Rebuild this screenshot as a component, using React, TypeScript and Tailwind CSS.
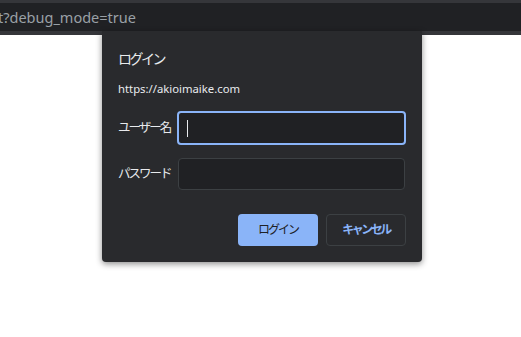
export default function App() {
  return (
    <div
      className="relative w-[521px] h-[337px] overflow-hidden bg-white"
      style={{ fontFamily: '"Noto Sans", "Noto Sans CJK JP", sans-serif' }}
    >
      {/* browser chrome */}
      <div className="h-[3px] bg-[#35363a]" />
      <div className="h-[28px] bg-[#202124] flex items-center overflow-hidden">
        <span className="-ml-[2px] text-[14.5px] leading-none text-[#9aa0a6] whitespace-nowrap">
          t?debug_mode=true
        </span>
      </div>
      <div className="h-[4px] bg-[#35363a]" />

      {/* login dialog */}
      <div className="absolute left-[102px] top-[31px] w-[320px] rounded-b-[4px] bg-[#292a2d] shadow-[0_2px_6px_rgba(0,0,0,0.45)] pl-[16px] pr-[16px] pt-[18px] pb-[16px]">
        <div className="text-[14px] leading-[20px] tracking-[-2.5px] text-[#e8eaed]">ログイン</div>
        <div className="mt-[12px] text-[11.3px] leading-[16px] text-[#e8eaed]">https://akioimaike.com</div>

        <div className="mt-[14px] flex items-center">
          <label className="w-[59px] shrink-0 whitespace-nowrap text-[12.5px] tracking-[-2px] text-[#e8eaed]">ユーザー名</label>
          <div className="w-[229px] h-[34px] rounded-[4px] border-2 border-[#8ab4f8] bg-[#202124] flex items-center pl-[8px]">
            <div className="w-px h-[17px] bg-[#e8eaed]" />
          </div>
        </div>

        <div className="mt-[13px] flex items-center">
          <label className="w-[60px] shrink-0 whitespace-nowrap text-[12.5px] tracking-[-2px] text-[#e8eaed]">パスワード</label>
          <div className="w-[227px] h-[32px] rounded-[4px] border border-[#3c4043] bg-[#202124]" />
        </div>

        <div className="mt-[24px] flex justify-end gap-[8px]">
          <button className="w-[80px] h-[32px] rounded-[4px] bg-[#8ab4f8] text-[12px] tracking-[-2px] text-[#202124]">
            ログイン
          </button>
          <button className="w-[80px] h-[32px] rounded-[4px] border border-[#3c4043] bg-[#292a2d] text-[12px] font-bold tracking-[-2.5px] text-[#8ab4f8]">
            キャンセル
          </button>
        </div>
      </div>
    </div>
  )
}
